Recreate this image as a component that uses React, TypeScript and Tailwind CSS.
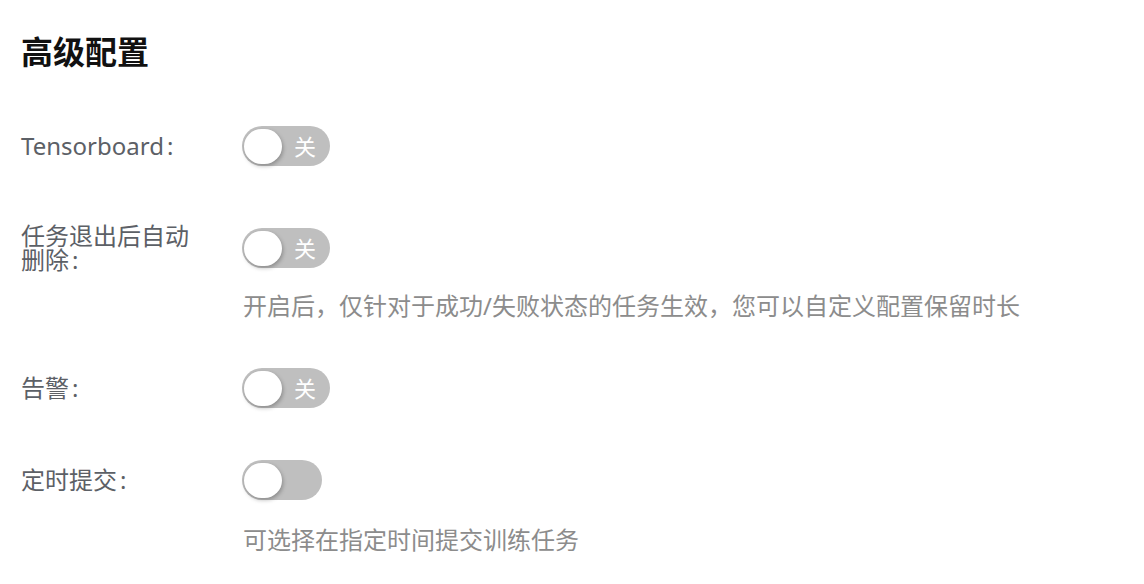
import React from "react";

function Toggle({ text }: { text?: string }) {
  return (
    <div
      className={`relative h-[40px] rounded-full bg-[#bfbfbf] ${text ? "w-[88px]" : "w-[80px]"}`}
    >
      <span className="absolute left-[2px] top-[3px] h-[35px] w-[38px] rounded-full bg-white shadow-[1px_2px_4px_rgba(0,0,0,0.28)]" />
      {text && (
        <span className="absolute right-[14px] top-0 text-[22px] leading-[40px] text-white">
          {text}
        </span>
      )}
    </div>
  );
}

function Row({
  label,
  toggle,
  desc,
  className,
  descClass,
}: {
  label: string;
  toggle?: string;
  desc?: string;
  className?: string;
  descClass?: string;
}) {
  return (
    <div className={className}>
      <div className="flex items-center">
        <div className="w-[221px] shrink-0">
          <div className="w-[184px] text-[24px] leading-[24px] text-[#5c6066]">
            {label}
            <span className="ml-[3px]">:</span>
          </div>
        </div>
        <Toggle text={toggle} />
      </div>
      {desc && (
        <p className={`pl-[222px] text-[24px] leading-[36px] text-[#8c8c8c] ${descClass ?? ""}`}>
          {desc}
        </p>
      )}
    </div>
  );
}

export default function App() {
  return (
    <div
      className="min-h-screen bg-white pl-[21px] pt-[32px]"
      style={{ fontFamily: '"Noto Sans", "Noto Sans CJK SC", sans-serif' }}
    >
      <h1 className="text-[32px] font-bold leading-[40px] text-[#111]">高级配置</h1>

      <Row className="mt-[54px]" label="Tensorboard" toggle="关" />
      <Row
        className="mt-[58px]"
        label="任务退出后自动删除"
        toggle="关"
        desc="开启后，仅针对于成功/失败状态的任务生效，您可以自定义配置保留时长"
        descClass="mt-[16px]"
      />
      <Row className="mt-[44px]" label="告警" toggle="关" />
      <Row
        className="mt-[52px]"
        label="定时提交"
        desc="可选择在指定时间提交训练任务"
        descClass="mt-[22px]"
      />
    </div>
  );
}
